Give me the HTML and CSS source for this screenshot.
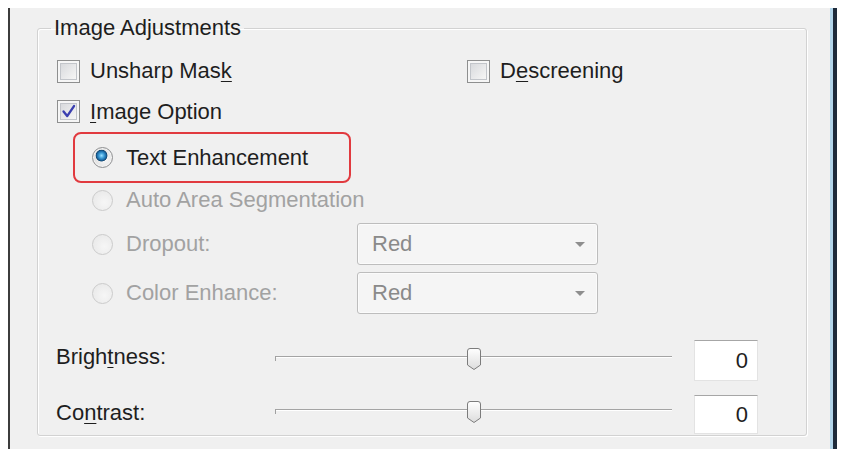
FILE: index.html
```html
<!DOCTYPE html>
<html>
<head>
<meta charset="utf-8">
<link rel="stylesheet" href="styles.css">
</head>
<body>
<div class="dialog">
  <fieldset class="group">
    <legend>Image Adjustments</legend>
    <div class="row-top">
      <label class="check"><span class="box"></span><span>Unsharp Mas<u>k</u></span></label>
      <label class="check"><span class="box"></span><span>D<u>e</u>screening</span></label>
    </div>
    <div class="row-opt">
      <label class="check"><span class="box"><svg class="tick" viewBox="0 0 22 22" width="20" height="20"><path d="M5 10.5 L9 15.5 L16.5 4.5" fill="none" stroke="#3a3fb0" stroke-width="2.6" stroke-linecap="round" stroke-linejoin="round"/></svg></span><span><u>I</u>mage Option</span></label>
    </div>
    <div class="highlight">
      <label class="radio"><span class="dot on"></span><span>Text Enhancement</span></label>
    </div>
    <div class="radio-row auto">
      <label class="radio disabled"><span class="dot"></span><span>Auto Area Segmentation</span></label>
    </div>
    <div class="radio-row drop">
      <label class="radio disabled labelcol"><span class="dot"></span><span>Dropout:</span></label>
      <div class="combo"><span>Red</span><span class="arrow"></span></div>
    </div>
    <div class="radio-row color">
      <label class="radio disabled labelcol"><span class="dot"></span><span>Color Enhance:</span></label>
      <div class="combo"><span>Red</span><span class="arrow"></span></div>
    </div>
    <div class="slider-row bright">
      <span class="slabel">Brigh<u>t</u>ness:</span>
      <div class="track"><span class="thumb"><svg viewBox="0 0 14 22" width="14" height="22"><defs><linearGradient id="tg" x1="0" y1="0" x2="0" y2="1"><stop offset="0" stop-color="#ffffff"/><stop offset="1" stop-color="#dcdcdc"/></linearGradient></defs><path d="M3 0.5 H11 Q13.5 0.5 13.5 3 V17 L7 21.5 L0.5 17 V3 Q0.5 0.5 3 0.5 Z" fill="url(#tg)" stroke="#7c7c7c"/></svg></span></div>
      <div class="num">0</div>
    </div>
    <div class="slider-row contrast">
      <span class="slabel">Co<u>n</u>trast:</span>
      <div class="track"><span class="thumb"><svg viewBox="0 0 14 22" width="14" height="22"><path d="M3 0.5 H11 Q13.5 0.5 13.5 3 V17 L7 21.5 L0.5 17 V3 Q0.5 0.5 3 0.5 Z" fill="url(#tg)" stroke="#7c7c7c"/></svg></span></div>
      <div class="num">0</div>
    </div>
  </fieldset>
</div>
</body>
</html>
```
FILE: styles.css
```css
html, body {
  margin: 0;
  padding: 0;
  background: #ffffff;
}
body {
  font-family: "Liberation Sans", Arial, sans-serif;
  font-size: 22px;
  color: #1e1e1e;
}
u {
  text-decoration-thickness: 1px;
  text-underline-offset: 3px;
}
.dialog {
  box-sizing: border-box;
  margin: 8px 0 0 8px;
  width: 829px;
  height: 441px;
  padding-top: 7px;
  background: #f0f0f0;
  border-left: 2px solid #3c3c3c;
  border-right: 4px solid #1e2a3a;
  box-shadow: inset -3px 0 0 #b3d5ea;
}
.group {
  box-sizing: border-box;
  margin: 0 0 0 27px;
  width: 770px;
  min-width: 0;
  padding: 10px 0 1px 0;
  border: 1px solid #d2d2d2;
  border-radius: 3px;
  box-shadow: inset 1px 1px 0 #ffffff, 1px 1px 0 #ffffff;
}
.group legend {
  margin-left: 13px;
  padding: 0 3px;
  line-height: 26px;
  font-size: 22px;
}
.row-top {
  display: grid;
  grid-template-columns: 410px auto;
  align-items: center;
  height: 40px;
  margin-left: 19px;
}
.row-opt {
  display: flex;
  align-items: center;
  height: 41px;
  margin-left: 19px;
}
.check {
  display: flex;
  align-items: center;
  gap: 10px;
  white-space: nowrap;
}
.box {
  box-sizing: border-box;
  width: 23px;
  height: 23px;
  border: 1px solid #8e8f8f;
  background: linear-gradient(135deg, #d2d4d8 0%, #f2f2f2 75%, #fafafa 100%);
  box-shadow: inset 0 0 0 2px #f6f6f6, inset 0 0 0 3px #c2c5ca;
  display: flex;
  align-items: center;
  justify-content: center;
}
.tick {
  display: block;
}
.highlight {
  box-sizing: border-box;
  margin-left: 35px;
  width: 278px;
  height: 51px;
  border: 2px solid #e13a3f;
  border-radius: 8px;
  padding-left: 17px;
  display: flex;
  align-items: center;
}
.radio {
  display: flex;
  align-items: center;
  gap: 13px;
  white-space: nowrap;
}
.dot {
  box-sizing: border-box;
  flex: none;
  width: 21px;
  height: 21px;
  border-radius: 50%;
  border: 1px solid #8f9092;
  background: radial-gradient(circle at 60% 60%, #f8f8f8 0, #dcdcdc 100%);
  box-shadow: inset 0 0 0 1px #f4f4f4;
}
.dot.on {
  background:
    radial-gradient(circle at 45% 40%, #9be0ff 0, #3f9fd8 2.5px, #1c6aa6 4.5px, #12466f 5.5px, rgba(0,0,0,0) 6.2px),
    radial-gradient(circle at 60% 60%, #f8f8f8 0, #d4d4d4 100%);
}
.radio.disabled {
  color: #a2a2a2;
}
.radio.disabled .dot {
  border-color: #cbcbcb;
  background: radial-gradient(circle at 60% 60%, #f6f6f6 0, #e6e6e6 100%);
  box-shadow: none;
}
.radio-row {
  display: flex;
  align-items: center;
  margin-left: 54px;
}
.labelcol {
  width: 265px;
  flex: none;
}
.auto {
  height: 34px;
}
.drop {
  margin-top: 6px;
  height: 42px;
}
.color {
  margin-top: 7px;
  height: 42px;
}
.combo {
  box-sizing: border-box;
  width: 241px;
  height: 100%;
  border: 1px solid #bdbdbd;
  border-radius: 3px;
  background: #f5f5f5;
  box-shadow: inset 0 0 0 1px #fbfbfb;
  display: flex;
  align-items: center;
  justify-content: space-between;
  padding: 0 12px 0 14px;
  color: #8a8a8a;
}
.arrow {
  width: 0;
  height: 0;
  border-left: 5px solid transparent;
  border-right: 5px solid transparent;
  border-top: 5px solid #8e8e8e;
}
.slider-row {
  display: flex;
  align-items: center;
  margin-left: 18px;
}
.bright {
  margin-top: 26px;
  height: 41px;
}
.contrast {
  margin-top: 14px;
  height: 39px;
}
.slabel {
  width: 219px;
  margin-bottom: 8px;
}
.contrast .slabel {
  margin-bottom: 4px;
}
.track {
  position: relative;
  width: 397px;
  height: 1px;
  background: #a4a4a4;
  border-bottom: 1px solid #ffffff;
  margin-bottom: 8px;
}
.contrast .track {
  margin-bottom: 10px;
}
.track::before {
  content: "";
  position: absolute;
  left: 0;
  top: 0;
  width: 1px;
  height: 5px;
  background: #a0a0a0;
}
.thumb {
  position: absolute;
  left: 50%;
  top: -8px;
  transform: translateX(-50%);
  width: 14px;
  height: 22px;
}
.thumb svg {
  display: block;
}
.num {
  box-sizing: border-box;
  margin-left: 22px;
  width: 64px;
  height: 100%;
  background: #ffffff;
  border: 1px solid #e3e3e3;
  border-top-color: #a6a6a6;
  display: flex;
  align-items: center;
  justify-content: flex-end;
  padding-right: 9px;
}
```
